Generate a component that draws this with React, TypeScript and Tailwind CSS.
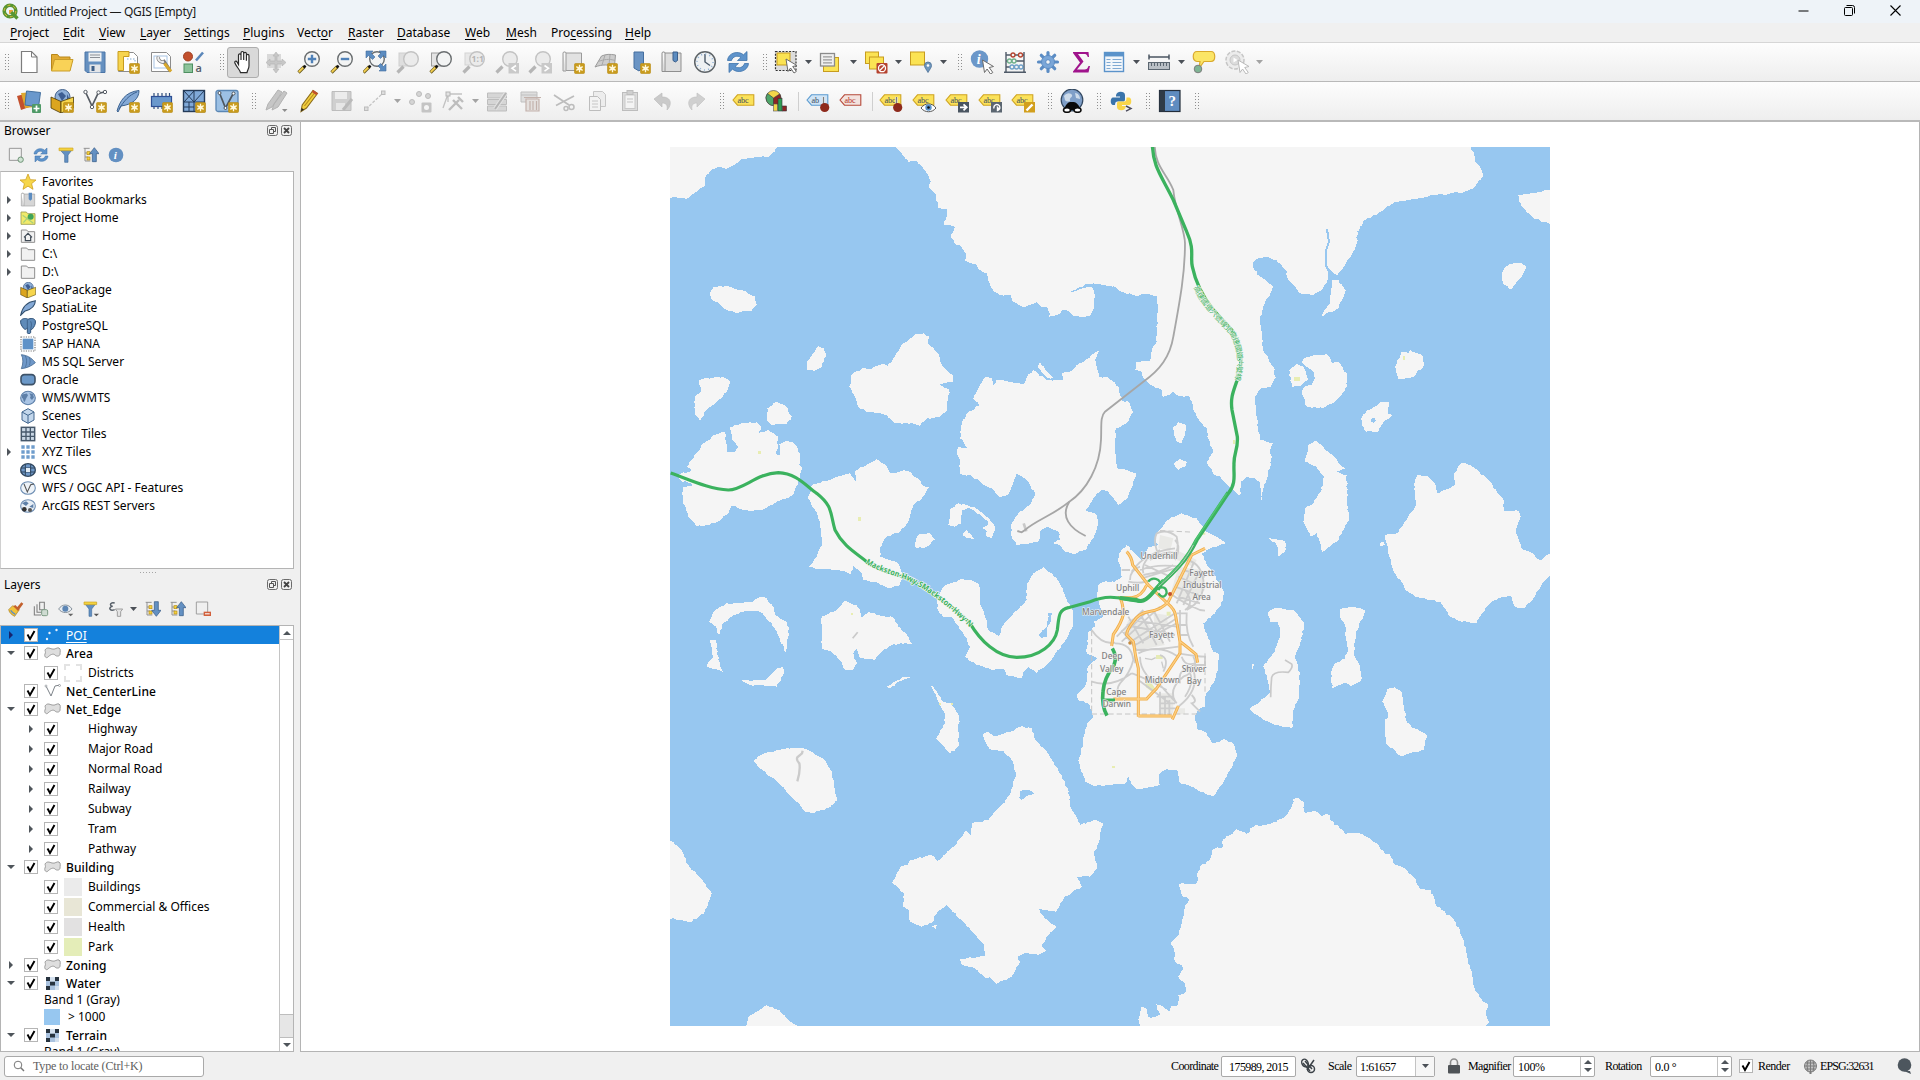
import React from 'react';

/* ---------- shared glyph parts ---------- */

type Kids = { children?: React.ReactNode };

function Ico({ children, s = 24 }: Kids & { s?: number }) {
  return (
    <svg width={s} height={s} viewBox="0 0 24 24" fill="none" className="block shrink-0">
      {children}
    </svg>
  );
}

const Star = () => (
  <g>
    <rect x="13.5" y="13.5" width="10" height="10" rx="1" fill="#c99b1c" stroke="#b98c12" strokeWidth=".6" />
    <path d="M18.5 14.8v7.4M15.3 16.6l6.4 3.8M21.7 16.6l-6.4 3.8" stroke="#fff8dc" strokeWidth="1.3" />
    <circle cx="18.5" cy="18.5" r="2" fill="#fff8dc" />
  </g>
);

const Handle = () => (
  <div className="grid grid-cols-2 gap-x-[2px] gap-y-[2px] w-[4px] shrink-0">
    {Array.from({ length: 12 }).map((_, i) => (
      <div key={i} className="w-px h-px bg-[#8f8f8f]" />
    ))}
  </div>
);

const Arrow = ({ dim = false }: { dim?: boolean }) => (
  <svg width="7" height="4" viewBox="0 0 7 4" className="block shrink-0">
    <path d="M0 0h7L3.5 4z" fill={dim ? '#a3a3a3' : '#4b5057'} />
  </svg>
);

const Lens = ({ dim = false, x = 0 }: { dim?: boolean; x?: number }) => (
  <g transform={`translate(${x} 0)`}>
    <path d="M1.5 22.5l6-6" stroke={dim ? '#b5b5b5' : '#6b5a1e'} strokeWidth="3.2" />
    {!dim && <path d="M1.8 22l4.6-4.6" stroke="#f3cf4e" strokeWidth="1.8" />}
    {!dim && <path d="M6.6 17.6l2-2" stroke="#111" strokeWidth="2.4" />}
    <circle cx="15" cy="9" r="7.3" fill={dim ? '#ebebeb' : '#f3f4f4'} stroke={dim ? '#c3c3c3' : '#6a6e70'} strokeWidth="1.4" />
  </g>
);

const Sheet = ({ c = '#8c8c8c' }: { c?: string }) => (
  <path d="M2.5 2.5h15l4 4v15h-19z" fill="#fff" stroke={c} />
);

const Cursor = ({ x = 0, y = 0, dim = false }: { x?: number; y?: number; dim?: boolean }) => (
  <path
    transform={`translate(${x} ${y})`}
    d="M11 9l11 6.5-4.3 1 3.6 5-2.3 1.5-3.4-5-2.6 3.5z"
    fill="#fff"
    stroke={dim ? '#b9b9b9' : '#6b6b6b'}
    strokeWidth="1"
  />
);

const Tag = ({ red = false, blue = false }: { red?: boolean; blue?: boolean }) => (
  <g>
    <path
      d="M1 11l4.5-5.2h16.3v10.4H5.500z"
      fill={red ? '#f3e3df' : blue ? '#cfe4f6' : '#fbe25a'}
      stroke={red ? '#b5493a' : blue ? '#5b9bd0' : '#cfa422'}
      strokeWidth="1.1"
    />
    <text x="5.4" y="13.8" fontSize="8.200" fontFamily="Liberation Serif, serif" fill={red ? '#b5301c' : '#3c4a5c'}>
      {blue ? 'ab' : 'abc'}
    </text>
  </g>
);

const Pin = () => (
  <g>
    <path d="M17.500 8v7" stroke="#ddd" strokeWidth="2.400" />
    <path d="M17.500 8v7" stroke="#555" strokeWidth=".7" />
    <circle cx="18.700" cy="18.500" r="4.600" fill="#8e2a1c" />
  </g>
);

const Globe = ({ c = '#5d7fa8', f = '#a9c4e4' }: { c?: string; f?: string }) => (
  <g>
    <ellipse cx="12" cy="12" rx="11" ry="10" fill={f} stroke={c} strokeWidth="1.600" />
    <path d="M3 8c3-3 5-1 7-3l2 3-3 5-2 5c-3-2-1-5-4-6zM14 5l5 1 2 5-3 4-3-3 1-3z" fill={c} />
  </g>
);

/* ---------- toolbar icons ---------- */

const newFile = (
  <Ico>
    <path d="M4.500 1.500h10l5.500 5.500v15.500h-15.500z" fill="#fff" stroke="#7d7d7d" strokeWidth="1.200" />
    <path d="M14.500 1.500v5.500h5.500" stroke="#7d7d7d" />
  </Ico>
);
const openFile = (
  <Ico>
    <path d="M1.500 20V4.500h6l2 2.500h10.500v13z" fill="#e2ac35" stroke="#b98718" />
    <path d="M1.500 21l3-11.500h18.500L20 21z" fill="#f9d257" stroke="#c99c28" />
  </Ico>
);
const save = (
  <Ico>
    <path d="M2 2h20v20.500H4l-2-2z" fill="#6590c0" stroke="#4a74a6" />
    <rect x="5.500" y="2.500" width="13" height="9" fill="#eef0f2" />
    <path d="M7 5h10M7 7.500h10" stroke="#8a8f96" />
    <rect x="6.500" y="14.500" width="11" height="8" fill="#e3e5e8" />
    <rect x="8.500" y="16" width="3" height="5" fill="#3d5f88" />
  </Ico>
);
const layout = (
  <Ico>
    <Sheet />
    <path d="M2 1.500h11v5H7.500v14H2z" fill="#f6d44f" stroke="#c79c1f" />
    <path d="M11 9h8v5" stroke="#7fa7d0" strokeDasharray="1.500 1.500" />
    <Star />
  </Ico>
);
const layoutMgr = (
  <Ico>
    <Sheet />
    <rect x="5" y="6" width="13" height="12" stroke="#a7c4e4" />
    <path d="M9.500 6.500a4 4 0 0 0 5.500 5l6 9" stroke="#7a7a7a" strokeWidth="3.400" />
    <path d="M9.500 6.500a4 4 0 0 0 5.500 5" stroke="#ededed" strokeWidth="2" />
    <path d="M15.500 13.500l6.500 8" stroke="#d9a92c" strokeWidth="3" />
  </Ico>
);
const styleMgr = (
  <Ico>
    <circle cx="6" cy="6.500" r="4.500" fill="#c3502d" stroke="#a03e20" />
    <path d="M14 10.500l7-8" stroke="#5b87ba" strokeWidth="2.600" />
    <rect x="2" y="14" width="8.500" height="8.500" fill="#8cc39a" stroke="#4d8f60" />
    <text x="13.500" y="21.500" fontSize="11" fontFamily="Open Sans, sans-serif" fontWeight="600" fill="#555c66">a</text>
  </Ico>
);
const hand = (
  <Ico>
    <path
      d="M7.500 14.500V5.200c0-1.900 2.500-1.900 2.500 0V10 3c0-2 2.700-2 2.700 0v7-6.300c0-1.900 2.700-1.900 2.700 0v7-5c0-1.800 2.600-1.800 2.600 0v10c0 3-1.500 4-2 7H9.500c-.5-3-3.500-5-5.500-9.500-1-2.200 1.200-2.800 2.200-1z"
      fill="#fff"
      stroke="#2b2b2b"
      strokeWidth="1.200"
    />
  </Ico>
);
const panSel = (
  <Ico>
    <rect x="3" y="4" width="14" height="14" fill="#d9d9d9" />
    <path d="M12 2l3 4h-2v5h5V9l4 3.500-4 3.500v-2h-5v5h2l-3 4-3-4h2v-5H6v2l-4-3.500L6 9v2h5V6H9z" fill="#c7c7c7" stroke="#b3b3b3" strokeWidth=".6" />
  </Ico>
);
const zoomIn = (
  <Ico>
    <Lens />
    <path d="M15 4.800v8.400M10.800 9h8.400" stroke="#4f81b8" strokeWidth="2.400" />
  </Ico>
);
const zoomOut = (
  <Ico>
    <Lens />
    <path d="M10.800 9h8.400" stroke="#4f81b8" strokeWidth="2.400" />
  </Ico>
);
const zoomFull = (
  <Ico>
    <Lens x={-1} />
    <path d="M3 1h7L8 3l4 4-2.500 2.500-4-4L3 8zM23 1h-7l2 2-3 3 2.500 2.500 3-3L23 8zM23 21h-7l2-2-3-3 2.500-2.500 3 3L23 14z" fill="#5c8cc0" stroke="#3f6da0" strokeWidth=".6" />
  </Ico>
);
const zoomSel = (
  <Ico>
    <rect x="3" y="3" width="12" height="13" fill="#dedede" stroke="#cfcfcf" />
    <Lens dim />
  </Ico>
);
const zoomLayer = (
  <Ico>
    <rect x="2.500" y="3" width="12" height="13" fill="#e4e4e4" stroke="#9c9c9c" />
    <Lens />
  </Ico>
);
const zoomNative = (
  <Ico>
    <rect x="3" y="3" width="12" height="12" fill="#e8e8e8" stroke="#d3d3d3" />
    <Lens dim />
    <text x="9.600" y="12" fontSize="8.500" fontWeight="700" fontFamily="Open Sans, sans-serif" fill="#b5b5b5">1:1</text>
  </Ico>
);
const zoomPrev = (
  <Ico>
    <Lens dim />
    <rect x="13.500" y="13" width="10.500" height="10.500" fill="#c9c9c9" />
    <path d="M21 15.500l-4 2.800 4 2.800" stroke="#fff" strokeWidth="1.600" />
  </Ico>
);
const zoomNext = (
  <Ico>
    <Lens dim />
    <rect x="13.500" y="13" width="10.500" height="10.500" fill="#c9c9c9" />
    <path d="M16.500 15.500l4 2.800-4 2.800" stroke="#fff" strokeWidth="1.600" />
  </Ico>
);
const mapView = (
  <Ico>
    <path d="M2 3c0-1.500 3-1.500 3 0h15.500v17.500H5V3M2 3v18h3" fill="#e2e2e2" stroke="#9a9a9a" />
    <Star />
  </Ico>
);
const view3d = (
  <Ico>
    <path d="M7.500 6c5-2 8-2 14-1l-1 11c-6-1-12-2-19.500 1z" fill="#cdcdcd" stroke="#9b9b9b" />
    <path d="M4 11.500c6-2 11-3 17-1M11 5L8 15M16 5l-1 10" stroke="#a9a9a9" />
    <Star />
  </Ico>
);
const newBookmark = (
  <Ico>
    <path d="M7 2h9.500v15l-4.500 4-5-3z" fill="#6a94c4" stroke="#456f9f" />
    <Star />
  </Ico>
);
const bookmarks = (
  <Ico>
    <path d="M2 3c0-1.500 3-1.500 3 0h16v18.500H5V3M2 3v18.500h3" fill="#dedede" stroke="#8f8f8f" />
    <path d="M13 2h4.500v8.500l-2.200 1.500-2.300-1.500z" fill="#5c8cc0" stroke="#3b5f8c" />
  </Ico>
);
const clock = (
  <Ico>
    <circle cx="12" cy="12" r="10.300" fill="#eef1f3" stroke="#5e6468" strokeWidth="1.500" />
    <path d="M12 4v8l5 3.500" stroke="#4b5a6a" strokeWidth="1.400" />
    <circle cx="12" cy="12" r="8" stroke="#8fb0d4" strokeDasharray="1 3.190" strokeWidth="1.600" />
  </Ico>
);
const RefreshPaths = () => (
  <g>
    <path d="M1.500 10.500C2 3 12 0 17.500 4.800L21 1.500v9h-9.500L15 7.500C11.500 5 6.500 6.500 5.500 10.500z" fill="#5e93cb" stroke="#3f74ab" strokeWidth=".8" />
    <path d="M22.500 13.500C22 21 12 24 6.500 19.200L3 22.500v-9h9.500L9 16.500c3.500 2.500 8.500 1 9.500-3z" fill="#5e93cb" stroke="#3f74ab" strokeWidth=".8" />
  </g>
);
const refresh = (
  <Ico>
    <RefreshPaths />
  </Ico>
);
const select = (
  <Ico>
    <rect x="1.500" y="1.500" width="20.500" height="19" fill="#dcdcdc" stroke="#333" strokeDasharray="2 1.400" strokeWidth="1.200" />
    <rect x="3" y="3" width="13" height="12" fill="#fbe353" stroke="#c79c1f" />
    <Cursor x={1} y={0} />
  </Ico>
);
const selectValue = (
  <Ico>
    <rect x="4.500" y="7.500" width="15" height="14" fill="#fbe353" stroke="#c79c1f" />
    <rect x="1.500" y="3.500" width="14" height="12.500" fill="#efefef" stroke="#8b8b8b" strokeWidth="1.300" />
    <path d="M4 6.800h9M4 9.800h9M4 12.800h9" stroke="#9a9a9a" strokeWidth="1.200" />
  </Ico>
);
const deselect = (
  <Ico>
    <rect x="1.500" y="2" width="13" height="11.500" fill="#fbe353" stroke="#c79c1f" />
    <rect x="5.500" y="7" width="14" height="12" fill="#fbe353" stroke="#c79c1f" />
    <rect x="12.500" y="13" width="11" height="10.500" rx="1" fill="#b5432f" />
    <circle cx="18" cy="18.200" r="3.500" stroke="#fff" strokeWidth="1.300" />
    <path d="M15.500 20.700l5-5" stroke="#fff" strokeWidth="1.300" />
  </Ico>
);
const selectLoc = (
  <Ico>
    <rect x="1.500" y="2" width="14" height="13" fill="#fbe353" stroke="#c79c1f" />
    <path d="M19 22.500c-2-3.500-3.500-5-3.500-7a3.500 3.500 0 0 1 7 0c0 2-1.500 3.500-3.500 7z" fill="#6f97bd" stroke="#4a6f96" strokeWidth=".8" />
    <circle cx="19" cy="15.500" r="1.300" fill="#fff" />
  </Ico>
);
const InfoDisc = () => (
  <g>
    <circle cx="9.500" cy="9" r="8.700" fill="#6b97c9" />
    <text x="6.800" y="14" fontSize="14" fontStyle="italic" fontWeight="700" fontFamily="Liberation Serif, serif" fill="#fff">i</text>
  </g>
);
const identify = (
  <Ico>
    <InfoDisc />
    <Cursor x={1.500} y={1} />
  </Ico>
);
const abacus = (
  <Ico>
    <path d="M3 2v20M21 2v20M3 5h18M3 11h18M3 17h18M1 22.300h22" stroke="#4f5a68" strokeWidth="1.400" />
    <g strokeWidth="1.300" fill="#f3f3f3">
      <g stroke="#b5432f"><circle cx="10" cy="5" r="2" /><circle cx="17.500" cy="5" r="2" /></g>
      <g stroke="#6fb08a"><circle cx="6.500" cy="11" r="2" /><circle cx="11" cy="11" r="2" /></g>
      <g stroke="#6fa0c8"><circle cx="9" cy="17" r="2" /><circle cx="13.500" cy="17" r="2" /><circle cx="18" cy="17" r="2" /></g>
    </g>
  </Ico>
);
const gear = (
  <Ico>
    <g stroke="#5b8cc4" strokeWidth="3.200" strokeLinecap="round">
      <path d="M12 2.500v19M2.500 12h19M5.300 5.300l13.400 13.400M18.700 5.300L5.300 18.700" />
    </g>
    <circle cx="12" cy="12" r="6.500" fill="#7aa6d8" stroke="#5b8cc4" />
    <circle cx="12" cy="12" r="2.300" fill="#f2f4f6" stroke="#5b8cc4" />
  </Ico>
);
const sigma = (
  <Ico>
    <path d="M4 2h15.500l.5 5h-1.200c-.8-2.500-1.800-3-4-3H9l5.500 7.500L8 19.500h7.500c2.200 0 3.200-1 4-3.500H21l-1.500 6.500H4v-1l7-9L4 3z" fill="#a0148c" />
  </Ico>
);
const table = (
  <Ico>
    <rect x="2.500" y="2.500" width="19" height="19" fill="#f2f6fa" stroke="#5b93ca" strokeWidth="1.400" />
    <path d="M3 4.700h18" stroke="#5b93ca" strokeWidth="3.500" />
    <path d="M4.500 9.500h4M10.500 9.500h9M4.500 12.500h4M10.500 12.500h9M4.500 15.500h4M10.500 15.500h9M4.500 18.500h4M10.500 18.500h9" stroke="#7fa9d2" strokeWidth="1.200" />
  </Ico>
);
const ruler = (
  <Ico>
    <path d="M2 7h20M2 4.500v5M22 4.500v5" stroke="#4b5662" strokeWidth="1.500" />
    <rect x="1.500" y="12.500" width="21" height="7" fill="#b9bfc5" stroke="#5b6670" />
    <path d="M4.500 13v3M7.500 13v3M10.500 13v3M13.500 13v3M16.500 13v3M19.500 13v3" stroke="#5b6670" />
  </Ico>
);
const mapTip = (
  <Ico>
    <path d="M5 1.500h14c5 0 5 10 0 10h-7l-5 7 1-7H5c-5 0-5-10 0-10z" fill="#fbe566" stroke="#d9a92c" strokeWidth="1.200" />
    <circle cx="6" cy="19" r="3.800" fill="#7fb494" stroke="#7c7c7c" />
  </Ico>
);
const actionRun = (
  <Ico>
    <circle cx="10" cy="10" r="9" fill="#ececec" stroke="#c6c6c6" strokeWidth="1.500" strokeDasharray="4 1.500" />
    <circle cx="10" cy="10" r="5" fill="#dcdcdc" stroke="#c6c6c6" />
    <path d="M8.500 7.500l4 2.500-4 2.500z" fill="#fff" />
    <Cursor x={2} y={1} dim />
  </Ico>
);

const dsManager = (
  <Ico>
    <path d="M0 7l11-3 4 13-11 4z" fill="#c3502d" />
    <path d="M4 4l13-1 1 15-10 1z" fill="#e0a92f" />
    <path d="M9.500 2l14 1.500-2 14.500L8 16z" fill="#6a98cc" stroke="#44709f" />
    <rect x="15" y="15" width="9" height="9" rx="1" fill="#4f9a67" />
    <path d="M19.500 16.500v6M16.500 19.500h6" stroke="#fff" strokeWidth="1.700" />
  </Ico>
);
const Gpkg = () => (
  <g>
    <circle cx="12.500" cy="8" r="7.500" fill="#8fb0d8" stroke="#42618c" />
    <path d="M8 5l4-2 4 4-4 5zM17 5l2 4-2 3z" fill="#3d5e92" />
    <path d="M1 8l10 4.500V24L1 19z" fill="#dba51f" stroke="#4a3a08" strokeWidth=".8" />
    <path d="M23.500 8L11 12.500V24l12.500-5z" fill="#f6d54d" stroke="#4a3a08" strokeWidth=".8" />
  </g>
);
const gpkg = (
  <Ico>
    <Gpkg />
    <Star />
  </Ico>
);
const newShp = (
  <Ico>
    <path d="M2.500 3l6.500 14 6-12.500 6.500-1.500" stroke="#555b63" strokeWidth="1.700" />
    <g fill="#fff" stroke="#555b63"><circle cx="2.500" cy="3" r="1.700" /><circle cx="9" cy="18" r="1.700" /><circle cx="15.500" cy="3.500" r="1.700" /><circle cx="22" cy="3" r="1.700" /></g>
    <Star />
  </Ico>
);
const Feather = () => (
  <path d="M1 22C4 12 9 3 23 1.500c0 8-6 14-18 15.500L2 23z" fill="#84a9d6" stroke="#3d6391" />
);
const spatialite = (
  <Ico>
    <Feather />
    <path d="M3 20C8 12 13 6 21 3" stroke="#3d6391" />
    <Star />
  </Ico>
);
const memLayer = (
  <Ico>
    <path d="M5 4v16M9 4v16M13 4v16M17 4v16M20.500 4v16" stroke="#2f4f7c" strokeWidth="1.200" />
    <rect x="2.500" y="7.500" width="20" height="10" fill="#6a98cc" stroke="#2f4f94" strokeWidth="1.200" />
    <Star />
  </Ico>
);
const meshLayer = (
  <Ico>
    <rect x="1.500" y="1.500" width="21" height="21" fill="#80a9d8" stroke="#243a58" strokeWidth="1.400" />
    <path d="M12 2v20M2 13h20M2 2l10 11M12 2L2 13M22 2L12 13M7 13v9M2 18h10" stroke="#243a58" />
    <Star />
  </Ico>
);
const virtLayer = (
  <Ico>
    <rect x="1" y="1.500" width="22" height="21" rx="2" fill="#9cc0e4" stroke="#5a86b4" strokeWidth="1.300" />
    <path d="M4.500 4l6 15L18 5" stroke="#4d565f" strokeWidth="1.700" />
    <g fill="#fff" stroke="#4d565f"><circle cx="4.500" cy="4" r="1.500" /><circle cx="10.500" cy="19" r="1.500" /><circle cx="18.500" cy="4.500" r="1.500" /></g>
    <Star />
  </Ico>
);
const editsDim = (
  <Ico>
    <path d="M2 21l2-6L14 1l4 2L8 18zM8 21l2-6L20 2l3 2-9 14z" fill="#c6c6c6" stroke="#b3b3b3" />
    <path d="M18 20h5.500L20.700 23z" fill="#8d8d8d" />
  </Ico>
);
const pencil = (
  <Ico>
    <path d="M4 22.500l1.200-6.500L16 1.500l4.500 3L9.500 19z" fill="#f3cf3f" stroke="#8b6c1b" strokeWidth="1.100" />
    <path d="M7.500 17L18.300 3" stroke="#b98f1e" strokeWidth="1.200" />
    <path d="M14.800 3l4.600 3.200L20.800 4.200l-4.700-3.200z" fill="#c3502d" />
    <path d="M4 22.500l.7-3.500 2.300 1.600z" fill="#222" />
  </Ico>
);
const saveDim = (
  <Ico>
    <path d="M2 2.500h19v19H2z" fill="#cfcfcf" stroke="#bdbdbd" />
    <rect x="5" y="3" width="12" height="7" fill="#ececec" />
    <rect x="6" y="14" width="9" height="7" fill="#e6e6e6" />
    <path d="M13 21l9-11" stroke="#bababa" strokeWidth="3" />
  </Ico>
);
const lineDim = (
  <Ico>
    <path d="M3 20L20 4" stroke="#c4c4c4" strokeDasharray="3 1.500" strokeWidth="1.300" />
    <rect x="1.500" y="18" width="3.500" height="3.500" fill="#ddd" stroke="#bbb" />
    <rect x="18.500" y="2" width="3.500" height="3.500" fill="#ddd" stroke="#bbb" />
  </Ico>
);
const pointsDim = (
  <Ico>
    <g fill="#d5d5d5" stroke="#bcbcbc"><circle cx="4" cy="13" r="2.500" /><circle cx="11" cy="5" r="2.500" /><circle cx="20" cy="7" r="2.500" /></g>
    <rect x="13.500" y="13.500" width="10" height="10" rx="1" fill="#c4c4c4" />
    <circle cx="18.500" cy="18.500" r="2.500" fill="#f5f5f5" />
  </Ico>
);
const vertexDim = (
  <Ico>
    <path d="M2 19L7 5h14M7 5v8" stroke="#c2c2c2" strokeWidth="1.300" />
    <rect x="5" y="3" width="4" height="4" fill="#e3e3e3" stroke="#b5b5b5" />
    <path d="M8 21l10-10M12 11l9 9M17 8l5 5" stroke="#bdbdbd" strokeWidth="2.400" />
  </Ico>
);
const formDim = (
  <Ico>
    <path d="M1.500 4h19v5h-19zM1.500 10.500h19v5h-19zM1.500 17h19v5h-19z" fill="#d6d6d6" stroke="#bdbdbd" />
    <path d="M9 20L20 4" stroke="#e3e3e3" strokeWidth="4" />
    <path d="M9 20L20 4" stroke="#b5b5b5" strokeWidth="2" />
  </Ico>
);
const trashDim = (
  <Ico>
    <path d="M2 3h16v10H2zM2 6h16" fill="#dedede" stroke="#c0c0c0" />
    <path d="M5 8.500h17M7 10h13v12H7zM11 12v9M14 12v9M17.500 12v9" stroke="#c3b2ac" fill="#e4e0de" strokeWidth="1.200" />
  </Ico>
);
const cutDim = (
  <Ico>
    <path d="M2 6l15 10M4 16.500L22 7" stroke="#bdbdbd" strokeWidth="1.800" />
    <circle cx="19.500" cy="18" r="2.500" stroke="#bdbdbd" strokeWidth="1.500" />
    <circle cx="14" cy="19.500" r="2" stroke="#bdbdbd" strokeWidth="1.500" />
  </Ico>
);
const copyDim = (
  <Ico>
    <path d="M8.500 2.500h9l3 3v12h-12z" fill="#ededed" stroke="#c6c6c6" />
    <path d="M4.500 7.500h8l3 3v11h-11z" fill="#f3f3f3" stroke="#bdbdbd" />
    <path d="M7 12h6M7 15h6M7 18h6" stroke="#c6c6c6" />
  </Ico>
);
const pasteDim = (
  <Ico>
    <rect x="4.500" y="3.500" width="15" height="18" fill="#dcdcdc" stroke="#bdbdbd" />
    <rect x="7" y="6" width="10" height="13.500" fill="#f4f4f4" stroke="#c9c9c9" />
    <rect x="9" y="1.500" width="6" height="4" fill="#cfcfcf" stroke="#bdbdbd" />
    <path d="M9 10h6M9 13h6" stroke="#c3c3c3" />
  </Ico>
);
const undoDim = (
  <Ico>
    <path d="M3 10l8-6v4c10 0 10 8 5 13 1-5-1-7-5-7v4z" fill="#cacaca" stroke="#bdbdbd" strokeWidth=".7" />
  </Ico>
);
const redoDim = (
  <Ico>
    <path d="M21 10l-8-6v4c-10 0-10 8-5 13-1-5 1-7 5-7v4z" fill="#d0d0d0" stroke="#c3c3c3" strokeWidth=".7" />
  </Ico>
);
const tag = (
  <Ico>
    <Tag />
  </Ico>
);
const diagram = (
  <Ico>
    <circle cx="8.500" cy="9" r="7.500" fill="#f4d649" stroke="#555" strokeWidth=".7" />
    <path d="M8.500 9L2.500 4.500A7.500 7.500 0 0 0 8.500 16.500z" fill="#4ea66a" stroke="#444" strokeWidth=".7" />
    <path d="M8.500 9l6.200-4a7.500 7.500 0 0 1-6.200 11.500z" fill="#8e2424" stroke="#444" strokeWidth=".7" />
    <rect x="8.500" y="15" width="4" height="7" fill="#f4d649" stroke="#555" strokeWidth=".6" />
    <rect x="13" y="9.500" width="4" height="12.500" fill="#2f9e55" stroke="#333" strokeWidth=".6" />
    <rect x="17.500" y="17" width="4" height="5" fill="#8e2424" stroke="#333" strokeWidth=".6" />
  </Ico>
);
const tagBluePin = (
  <Ico>
    <Tag blue />
    <Pin />
  </Ico>
);
const tagRed = (
  <Ico>
    <Tag red />
  </Ico>
);
const tagPin = (
  <Ico>
    <Tag />
    <Pin />
  </Ico>
);
const tagEye = (
  <Ico>
    <Tag />
    <path d="M9 19c4-5.500 11-5.500 15 0-4 5-11 5-15 0z" fill="#fff" stroke="#555" />
    <circle cx="16.500" cy="18.500" r="3.200" fill="#5b93ca" />
    <circle cx="16.500" cy="18.500" r="1.300" fill="#111" />
  </Ico>
);
const tagMove = (
  <Ico>
    <Tag />
    <rect x="13" y="13" width="11" height="10.500" fill="#4a5561" />
    <path d="M15 18.300h6M18.500 15.300l3.200 3-3.200 3" stroke="#fff" strokeWidth="1.800" />
  </Ico>
);
const tagRotate = (
  <Ico>
    <Tag />
    <rect x="13" y="13" width="11" height="10.500" fill="#5b6671" />
    <path d="M16 19.500a3 3 0 1 1 3.500 2v-3l2 2" stroke="#fff" strokeWidth="1.400" />
  </Ico>
);
const tagEdit = (
  <Ico>
    <Tag />
    <rect x="13" y="13" width="11" height="10.500" fill="#d29f1d" />
    <path d="M15.500 21.500l6-6" stroke="#fff" strokeWidth="2.400" />
  </Ico>
);
const metaSearch = (
  <Ico>
    <circle cx="12" cy="11" r="10.800" fill="#7f9fc8" stroke="#32475f" strokeWidth="1.200" />
    <path d="M4 7c3-4 7-3 8-1s-3 3-2 5-4 2-5 0zM15 4c3 0 5 3 5 6l-4-1z" fill="#cddbea" />
    <path d="M4.500 21c0-5 4-8 5.500-8h4c1.500 0 6 3 6 8z" fill="#0a0a0a" />
    <ellipse cx="7" cy="21" rx="3.500" ry="2.300" fill="#fff" stroke="#0a0a0a" strokeWidth="1.500" />
    <ellipse cx="17.500" cy="21" rx="3.500" ry="2.300" fill="#fff" stroke="#0a0a0a" strokeWidth="1.500" />
  </Ico>
);
const python = (
  <Ico>
    <path d="M7 6.500C7 1.500 16 1.500 16 6v4.500c0 1.500-1 2-2 2H8.500c-1.500 0-2.500 1-2.500 3.500H4C1 16 1 8.500 4 8.500h7v-1H7z" fill="#3a74ab" />
    <path d="M17.500 8.500H20c3 0 3 7.500 0 7.500h-7v1h4c0 5.500-9 5.500-9 1v-3.500c0-1.500 1-2 2-2h5.500c1.500 0 2-1.500 2-4z" fill="#f9d54a" />
    <path d="M17 17l5 2.600-5 2.600" stroke="#f5f5f5" strokeWidth="3" />
    <path d="M17 17l5 2.600-5 2.600" stroke="#4c4c5c" strokeWidth="1.500" />
  </Ico>
);
const help = (
  <Ico>
    <rect x="1.500" y="1.500" width="20.500" height="21" fill="#5f8cc0" stroke="#222d3a" strokeWidth="1.200" />
    <rect x="1.500" y="1.500" width="5.500" height="21" fill="#2f3b47" />
    <text x="10.500" y="17" fontSize="15" fontWeight="700" fontFamily="Liberation Serif, serif" fill="#fff">?</text>
  </Ico>
);

const Drop = ({ children, dim = false }: Kids & { dim?: boolean }) => (
  <div className="flex items-center gap-[7px] w-[45px] shrink-0">
    {children}
    <Arrow dim={dim} />
  </div>
);

const Sep = () => <div className="w-px h-[19px] bg-[#cfcfcf] shrink-0" />;

const Group = ({ children, items }: Kids & { items?: React.ReactElement[] }) => (
  <div className="flex items-center gap-[9px] shrink-0">
    {items?.map((it, i) => <React.Fragment key={i}>{it}</React.Fragment>)}
    {children}
  </div>
);

/* ---------- window chrome ---------- */

const menus: [string, string, string, string][] = [
  ['', 'P', 'roject', 'w-[53px]'],
  ['', 'E', 'dit', 'w-[36px]'],
  ['', 'V', 'iew', 'w-[41px]'],
  ['', 'L', 'ayer', 'w-[44px]'],
  ['', 'S', 'ettings', 'w-[59px]'],
  ['', 'P', 'lugins', 'w-[54px]'],
  ['Vect', 'o', 'r', 'w-[51px]'],
  ['', 'R', 'aster', 'w-[49px]'],
  ['', 'D', 'atabase', 'w-[68px]'],
  ['', 'W', 'eb', 'w-[41px]'],
  ['', 'M', 'esh', 'w-[45px]'],
  ['Pro', 'c', 'essing', 'w-[74px]'],
  ['', 'H', 'elp', 'w-[40px]'],
];

function TitleBar() {
  return (
    <div className="h-[23px] shrink-0 bg-[#eef3f8] flex items-center pl-[2px]">
      <svg width="17" height="17" viewBox="0 0 17 17">
        <circle cx="8" cy="8" r="5.800" fill="none" stroke="#589632" strokeWidth="3.600" />
        <circle cx="8" cy="8" r="5.800" fill="none" stroke="#e8b93a" strokeWidth="1" strokeDasharray="3 3" />
        <path d="M8 8l7.500 7.500" stroke="#589632" strokeWidth="3.400" />
        <path d="M7 7h4.500L7 11.500z" fill="#e8a13a" />
      </svg>
      <div className="ml-[5px] text-[12px] leading-[16px] tracking-[-0.3px] text-[#1a1a1a]">Untitled Project — QGIS [Empty]</div>
      <div className="ml-auto flex items-center gap-[35px] pr-[19px] -mt-[3px]">
        <svg width="11" height="11" viewBox="0 0 11 11"><path d="M.5 6h10" stroke="#000" /></svg>
        <svg width="11" height="11" viewBox="0 0 11 11" fill="none">
          <rect x=".5" y="2.500" width="8" height="8" rx="1" stroke="#000" />
          <path d="M2.500.500h6a2 2 0 0 1 2 2v6" stroke="#000" />
        </svg>
        <svg width="11" height="11" viewBox="0 0 11 11"><path d="M.5.500l10 10M10.500.500l-10 10" stroke="#000" strokeWidth="1.100" /></svg>
      </div>
    </div>
  );
}

function MenuBar() {
  return (
    <div className="h-[20px] shrink-0 bg-[#f0f0f0] border-b border-[#d6d6d6] flex items-center pl-[10px] text-[12px] text-black">
      {menus.map(([a, u, b, w]) => (
        <div key={a + u + b} className={w}>
          {a}
          <span className="underline underline-offset-2">{u}</span>
          {b}
        </div>
      ))}
    </div>
  );
}

function ToolbarOne() {
  return (
    <div className="h-[39px] shrink-0 flex items-center pl-[5px] bg-linear-to-b from-[#fdfdfd] to-[#eeeeee] border-b border-[#b9b9b9]">
      <Handle />
      <div className="w-[8px] shrink-0" />
      <Group items={[newFile, openFile, save, layout, layoutMgr, styleMgr]} />
      <div className="w-[14px] shrink-0" />
      <Handle />
      <div className="ml-[3px] mr-[5px] w-[32px] h-[31px] shrink-0 rounded-[3px] border border-[#adadad] bg-[#d9d9d9] flex items-center justify-center">{hand}</div>
      <Group items={[panSel, zoomIn, zoomOut, zoomFull, zoomSel, zoomLayer, zoomNative, zoomPrev, zoomNext, mapView, view3d, newBookmark, bookmarks, clock, refresh]} />
      <div className="w-[13px] shrink-0" />
      <Handle />
      <div className="w-[7px] shrink-0" />
      <Drop>{select}</Drop>
      <Drop>{selectValue}</Drop>
      <Drop>{deselect}</Drop>
      <Drop>{selectLoc}</Drop>
      <div className="w-[4px] shrink-0" />
      <Handle />
      <div className="w-[8px] shrink-0" />
      <Group items={[identify, abacus, gear, sigma]} />
      <div className="w-[9px] shrink-0" />
      <Drop>{table}</Drop>
      <Drop>{ruler}</Drop>
      <Group items={[mapTip]} />
      <div className="w-[9px] shrink-0" />
      <Drop dim>{actionRun}</Drop>
    </div>
  );
}

function ToolbarTwo() {
  return (
    <div className="h-[40px] shrink-0 flex items-center pl-[5px] bg-linear-to-b from-[#fdfdfd] to-[#eeeeee] border-b-2 border-[#b9b9b9]">
      <Handle />
      <div className="w-[8px] shrink-0" />
      <Group items={[dsManager, gpkg, newShp, spatialite, memLayer, meshLayer, virtLayer]} />
      <div className="w-[13px] shrink-0" />
      <Handle />
      <div className="w-[8px] shrink-0" />
      <Group items={[editsDim, pencil, saveDim]} />
      <div className="w-[9px] shrink-0" />
      <Drop dim>{lineDim}</Drop>
      <Group items={[pointsDim]} />
      <div className="w-[9px] shrink-0" />
      <Drop dim>{vertexDim}</Drop>
      <Group items={[formDim, trashDim, cutDim, copyDim, pasteDim, undoDim, redoDim]} />
      <div className="w-[12px] shrink-0" />
      <Handle />
      <div className="w-[8px] shrink-0" />
      <Group items={[tag, diagram, <Sep />]} />
      <div className="w-[7px] shrink-0" />
      <Group items={[tagBluePin, tagRed, <Sep />]} />
      <div className="w-[6px] shrink-0" />
      <Group items={[tagPin, tagEye, tagMove, tagRotate, tagEdit]} />
      <div className="w-[13px] shrink-0" />
      <Handle />
      <div className="w-[8px] shrink-0" />
      {metaSearch}
      <div className="w-[13px] shrink-0" />
      <Handle />
      <div className="w-[8px] shrink-0" />
      {python}
      <div className="w-[13px] shrink-0" />
      <Handle />
      <div className="w-[8px] shrink-0" />
      {help}
      <div className="w-[13px] shrink-0" />
      <Handle />
    </div>
  );
}

/* ---------- docks ---------- */

const DockTitle = ({ title }: { title: string }) => (
  <div className="h-[18px] shrink-0 flex items-center pl-[4px] pr-[8px] text-[12px] text-black">
    <span>{title}</span>
    <div className="ml-auto flex gap-[3px] -mt-px">
      <svg width="11" height="11" viewBox="0 0 11 11" fill="none">
        <rect x=".5" y=".5" width="10" height="10" rx="2" stroke="#6b6b6b" />
        <path d="M4.500 4.500v-2h4v4h-2M2.500 4.500h4v4h-4z" stroke="#555" />
      </svg>
      <svg width="11" height="11" viewBox="0 0 11 11" fill="none">
        <rect x=".5" y=".5" width="10" height="10" rx="2" stroke="#6b6b6b" />
        <path d="M3 3l5 5M8 3L3 8" stroke="#444" strokeWidth="1.800" />
      </svg>
    </div>
  </div>
);

const Tri = ({ open = false, c = '#4f555b' }: { open?: boolean; c?: string }) => (
  <svg width="8" height="8" viewBox="0 0 8 8" className="block shrink-0">
    <path d={open ? 'M0 2h8L4 6z' : 'M2 0l4 4-4 4z'} fill={c} />
  </svg>
);

const filterI = (
  <Ico s={16}>
    <path d="M2 3h20l-7 9v11h-5V12z" fill="#6390c2" stroke="#44709f" />
    <path d="M1.500 1.500h21v4h-21z" fill="#f3d33f" stroke="#cfa422" />
  </Ico>
);
const TreeArrow = ({ down = false }: { down?: boolean }) => (
  <Ico s={16}>
    <path d="M1 2h9M3 2v19h8M3 9h5M3 15h5" stroke="#8b8b8b" strokeWidth="1.400" />
    <rect x="6" y="7" width="4.500" height="4.500" fill="#f3d33f" stroke="#b98c12" />
    <rect x="6" y="15" width="4.500" height="4.500" fill="#f3d33f" stroke="#b98c12" />
    <path d={down ? 'M17 23l-7-9h4V1h6v13h4z' : 'M17 1l-7 9h4v12h6V10h4z'} fill="#6390c2" stroke="#2f5582" />
  </Ico>
);
const Folder = ({ children }: Kids) => (
  <Ico s={16}>
    <path d="M2 21.500V3h8l2 2.500h10v16z" fill="#f1f1f1" stroke="#8e8e8e" strokeWidth="1.500" />
    {children}
  </Ico>
);
const smallGlobe = (
  <Ico s={16}>
    <Globe />
  </Ico>
);

const browserRows: [string, boolean, React.ReactElement][] = [
  ['Favorites', false, <Ico s={16}><path d="M12 0l3.400 8.500 8.600.500-6.600 5.500L19.500 23 12 18.200 4.500 23l2.100-8.500L0 9l8.600-.5z" fill="#f6d64a" stroke="#cf9f23" strokeWidth="1.200" /></Ico>],
  ['Spatial Bookmarks', true, <Ico s={16}><path d="M2 3c0-2 4-2 4 0h16v18H6V3M2 3v18h4" fill="#d6d6d6" stroke="#a5a5a5" /><path d="M13 1h5v10l-2.500 2-2.500-2z" fill="#5c8cc0" /></Ico>],
  ['Project Home', true, <Ico s={16}><path d="M1.500 21.500V3h8l2 2.500h11v16z" fill="#f1ea6a" stroke="#9e9e55" strokeWidth="1.300" /><path d="M4 8l8 6 8 6M5 19l7-8" stroke="#a9d07a" strokeWidth="2" /><circle cx="16" cy="10" r="4.500" fill="#3fa35a" /></Ico>],
  ['Home', true, <Folder><path d="M6 14l6-6 6 6M8 13v6h8v-6" stroke="#3f4a55" strokeWidth="1.800" /></Folder>],
  ['C:\\', true, <Folder />],
  ['D:\\', true, <Folder />],
  ['GeoPackage', false, <Ico s={16}><Gpkg /></Ico>],
  ['SpatiaLite', false, <Ico s={16}><path d="M1 23C3 12 9 3 23 1c0 8-6 13-16 16z" fill="#84a9d6" stroke="#34516f" strokeWidth="1.600" /></Ico>],
  ['PostgreSQL', false, <Ico s={16}><path d="M1 4c3-4 8-4 11-2 4-2 9-2 11 2 1 5-2 10-5 13h-2v5c-1 2-5 2-5 0v-7c-2 2-4 3-5 1C3 13 0 8 1 4z" fill="#5f8bb9" stroke="#30537a" strokeWidth="1.500" /><path d="M11 3v12M16 5c2 4 1 8 0 11" stroke="#30537a" /></Ico>],
  ['SAP HANA', false, <Ico s={16}><rect x="4" y="4" width="16" height="16" fill="#5f92c8" /><rect x="1.500" y="1.500" width="21" height="21" stroke="#777" strokeWidth="1.800" strokeDasharray="1.800 1.800" /></Ico>],
  ['MS SQL Server', false, <Ico s={16}><path d="M2 1c3 5 3 14 0 21 9-1 15-4 21-9C17 5 10 2 2 1z" fill="#6f98c8" stroke="#42678f" strokeWidth="1.200" /><path d="M8 3c3 6 2 12 0 17M14 5c2 5 1 9 0 12" stroke="#42678f" /></Ico>],
  ['Oracle', false, <Ico s={16}><rect x="1.500" y="4" width="21" height="15" rx="5" fill="#6b98c8" stroke="#3d5268" strokeWidth="2.400" /></Ico>],
  ['WMS/WMTS', false, smallGlobe],
  ['Scenes', false, <Ico s={16}><path d="M12 1l9 5v12l-9 5-9-5V6z" fill="#c3d7ec" stroke="#42678f" strokeWidth="1.500" /><path d="M3 6l9 5 9-5M12 11v12" stroke="#42678f" strokeWidth="1.500" /></Ico>],
  ['Vector Tiles', false, <Ico s={16}><rect x="2" y="2" width="20" height="20" fill="#c8d6e4" stroke="#46586b" strokeWidth="2.200" /><path d="M9 2v20M15.500 2v20M2 9h20M2 15.500h20" stroke="#46586b" strokeWidth="2" /></Ico>],
  ['XYZ Tiles', true, <Ico s={16}><path d="M2 2h5v5H2zM9.500 2h5v5h-5zM17 2h5v5h-5zM2 9.500h5v5H2zM9.500 9.500h5v5h-5zM17 9.500h5v5h-5zM2 17h5v5H2zM9.500 17h5v5h-5zM17 17h5v5h-5z" fill="#6f9dcc" /></Ico>],
  ['WCS', false, <Ico s={16}><ellipse cx="12" cy="12" rx="11" ry="9.500" fill="#6f98c8" stroke="#30475f" strokeWidth="2" /><path d="M1 9h22M1 15h22M8 3v18M16 3v18" stroke="#30475f" strokeWidth="1.500" /><rect x="9" y="9" width="6" height="6" fill="#e3edf6" /></Ico>],
  ['WFS / OGC API - Features', false, <Ico s={16}><ellipse cx="12" cy="12" rx="11" ry="9.500" fill="#eef3f8" stroke="#6f8fb4" strokeWidth="1.600" /><path d="M6 6l5 12 5-11 5-1" stroke="#555" strokeWidth="1.600" /></Ico>],
  ['ArcGIS REST Servers', false, <Ico s={16}><ellipse cx="12" cy="12" rx="11" ry="9.500" fill="#e7eef5" stroke="#6f8fb4" strokeWidth="1.600" /><path d="M3 8l6-3 4 3-4 4zM14 13l6-4v6z" fill="#5d7fa8" /><circle cx="6.500" cy="17" r="3.500" fill="#333" /><circle cx="15" cy="18" r="3" fill="#555" /></Ico>],
];

function Browser() {
  return (
    <div className="shrink-0 flex flex-col h-[447px]">
      <DockTitle title="Browser" />
      <div className="h-[31px] shrink-0 flex items-center gap-[9px] pl-[8px] pb-[1px]">
        <Ico s={16}><path d="M2 2h18v18H2z" fill="#f2f2f2" stroke="#8b8b8b" strokeWidth="1.300" /><circle cx="19" cy="19" r="4" fill="#cfe3d3" stroke="#6f9377" strokeWidth="1.500" /></Ico>
        <Ico s={16}><RefreshPaths /></Ico>
        {filterI}
        <TreeArrow />
        <Ico s={16}><circle cx="12" cy="12" r="11" fill="#6390c2" /><text x="8.500" y="18" fontSize="17" fontStyle="italic" fontWeight="700" fontFamily="Liberation Serif, serif" fill="#fff">i</text></Ico>
      </div>
      <div className="flex-1 mr-[6px] bg-white border border-[#b4b4b4] border-l-[#d0d0d0] pt-[1px]">
        {browserRows.map(([label, arrow, icon]) => (
          <div key={label} className="h-[18px] flex items-center text-[12px] leading-[18px] text-black">
            <div className="w-[19px] shrink-0 pl-[4px]">{arrow && <Tri />}</div>
            {icon}
            <span className="ml-[6px] whitespace-pre">{label}</span>
          </div>
        ))}
      </div>
    </div>
  );
}

const Check = () => (
  <div className="w-[14px] h-[14px] shrink-0 bg-white border border-[#b5b5b5]">
    <svg width="12" height="12" viewBox="0 0 12 12" fill="none" className="block">
      <path d="M2.500 5.500l2.500 4.500 4.500-8" stroke="#000" strokeWidth="1.900" />
    </svg>
  </div>
);

const polyI = (
  <svg width="17" height="13" viewBox="0 0 17 13" className="block shrink-0">
    <path d="M1 3c2-3 4-2 7-1s5-2 7-1 1 4 1 6-3 3-5 1-5 0-7 2-4-1-3-3 0-3 0-4z" fill="#dedede" stroke="#9c9c9c" />
  </svg>
);
const lineI = (
  <svg width="17" height="14" viewBox="0 0 17 14" fill="none" className="block shrink-0">
    <path d="M2 2l5 10 4-10 5-1" stroke="#7c8288" />
    <circle cx="2" cy="2" r="1" fill="#fff" stroke="#7c8288" strokeWidth=".6" />
    <circle cx="15.500" cy="1.500" r="1" fill="#fff" stroke="#7c8288" strokeWidth=".6" />
  </svg>
);
const pointI = (
  <svg width="17" height="14" viewBox="0 0 17 14" className="block shrink-0">
    <circle cx="3" cy="11" r="1.200" fill="#e8f1fb" /><circle cx="5.500" cy="5" r="1.200" fill="#e8f1fb" /><circle cx="12.500" cy="2" r="1.200" fill="#e8f1fb" />
  </svg>
);
const rasterI = (
  <svg width="17" height="13" viewBox="0 0 17 13" className="block shrink-0">
    <path d="M2 0h13v13H2z" fill="#a9c2df" />
    <path d="M2 0h4v4H2zM11 0h4v4h-4zM6 4.500h5v4H6zM2 9h4v4H2z" fill="#27333f" />
    <path d="M6 0h5v4.500H6zM11 9h4v4h-4z" fill="#d3e0ee" />
  </svg>
);

type Layer = { t: string; k: 'top' | 'sub' | 'band' | 'val'; a?: 'o' | 'c'; i?: React.ReactElement; sel?: boolean; sw?: string };
const layers: Layer[] = [
  { t: 'POI', k: 'top', a: 'c', i: pointI, sel: true },
  { t: 'Area', k: 'top', a: 'o', i: polyI },
  { t: 'Districts', k: 'sub', sw: 'border-2 border-dashed border-[#e3e3e3] bg-white' },
  { t: 'Net_CenterLine', k: 'top', i: lineI },
  { t: 'Net_Edge', k: 'top', a: 'o', i: polyI },
  { t: 'Highway', k: 'sub', a: 'c' },
  { t: 'Major Road', k: 'sub', a: 'c' },
  { t: 'Normal Road', k: 'sub', a: 'c' },
  { t: 'Railway', k: 'sub', a: 'c' },
  { t: 'Subway', k: 'sub', a: 'c' },
  { t: 'Tram', k: 'sub', a: 'c' },
  { t: 'Pathway', k: 'sub', a: 'c' },
  { t: 'Building', k: 'top', a: 'o', i: polyI },
  { t: 'Buildings', k: 'sub', sw: 'bg-[#ebebeb]' },
  { t: 'Commercial & Offices', k: 'sub', sw: 'bg-[#e8e6d6]' },
  { t: 'Health', k: 'sub', sw: 'bg-[#e2e1e1]' },
  { t: 'Park', k: 'sub', sw: 'bg-[#e4edb8]' },
  { t: 'Zoning', k: 'top', a: 'c', i: polyI },
  { t: 'Water', k: 'top', a: 'o', i: rasterI },
  { t: 'Band 1 (Gray)', k: 'band' },
  { t: '> 1000', k: 'val' },
  { t: 'Terrain', k: 'top', a: 'o', i: rasterI },
  { t: 'Band 1 (Gray)', k: 'band' },
];

function LayerRow({ l }: { l: Layer }) {
  if (l.k === 'top')
    return (
      <div className={`h-[18px] shrink-0 flex items-center ${l.sel ? 'bg-[#1481dc]' : ''}`}>
        <div className="w-[23px] shrink-0 pl-[6px]">{l.a && <Tri open={l.a === 'o'} c={l.sel ? '#16246e' : undefined} />}</div>
        <Check />
        <div className="w-[28px] shrink-0 pl-[6px]">{l.i}</div>
        <span className={l.sel ? 'text-white underline underline-offset-2 leading-[18px] pt-px' : 'font-medium leading-[18px] pt-px tracking-[0.1px]'}>{l.t}</span>
      </div>
    );
  if (l.k === 'sub')
    return (
      <div className="h-[20px] shrink-0 flex items-center pt-px">
        <div className="w-[43px] shrink-0 pl-[26px]">{l.a && <Tri />}</div>
        <Check />
        <div className={`w-[18px] h-[18px] ml-[6px] mr-[6px] shrink-0 ${l.sw ?? ''}`} />
        <span className="leading-[18px] pt-px">{l.t}</span>
      </div>
    );
  if (l.k === 'band') return <div className="h-[16px] leading-[16px] shrink-0 pl-[43px]">{l.t}</div>;
  return (
    <div className="h-[18px] shrink-0 flex items-center pl-[43px]">
      <div className="w-[16px] h-[16px] bg-[#97c7f0] mr-[8px]" />
      {l.t}
    </div>
  );
}

function Layers() {
  return (
    <div className="flex-1 min-h-0 flex flex-col">
      <DockTitle title="Layers" />
      <div className="h-[31px] shrink-0 flex items-center gap-[9px] pl-[8px] pb-[1px]">
        <Ico s={16}><path d="M1 13l6-6 10 6-7 10C6 21 2 18 1 13z" fill="#f1c23a" stroke="#a67c1b" /><path d="M8 8l7 7 8-11-3-2-6 7-3-3z" fill="#c3602d" /><path d="M4 14c2 3 4 5 7 6" stroke="#5b8cc4" strokeWidth="2" /></Ico>
        <Ico s={16}><path d="M2 8v13h10M6 5v12h10M10 2h7v11h-7z" stroke="#7f7f7f" strokeWidth="1.600" /><rect x="13" y="13" width="9" height="9" rx="2" fill="#cfdcd2" stroke="#7f9d87" strokeWidth="1.500" /></Ico>
        <Ico s={16}><path d="M1 12c5-8 15-8 20 0-5 7-15 7-20 0z" fill="#e8edf2" stroke="#7f8a94" strokeWidth="1.400" /><circle cx="11" cy="11.500" r="4.500" fill="#5c85b4" /><path d="M15 19h8l-4 4z" fill="#666" /></Ico>
        <Ico s={16}><path d="M2 3h18l-7 9v11H9V12z" fill="#6390c2" stroke="#44709f" /><path d="M1.500 1.500h19v4h-19z" fill="#f3d33f" stroke="#cfa422" /><path d="M16 19h8l-4 4z" fill="#555" /></Ico>
        <div className="flex items-center gap-[6px] -mr-px">
          <Ico s={16}><path d="M10 3C4 1 1 7 7 8 0 9 2 16 10 13" stroke="#555d66" strokeWidth="2.200" /><path d="M11 12h11l-3 4v7h-5v-7z" fill="#e3e3e3" stroke="#9a9a9a" strokeWidth="1.400" /></Ico>
          <Arrow />
        </div>
        <TreeArrow down />
        <TreeArrow />
        <Ico s={16}><path d="M2 1.500h17v18H2z" fill="#f0f0f0" stroke="#9a9a9a" strokeWidth="1.400" /><rect x="13" y="16" width="11" height="6.500" fill="#d2603c" /><path d="M15 19.200h7" stroke="#fff" strokeWidth="1.600" /></Ico>
      </div>
      <div className="flex-1 min-h-0 mr-[6px] bg-white border border-[#b4b4b4] flex">
        <div className="flex-1 flex flex-col overflow-hidden text-[12px] text-black">
          {layers.map((l, i) => <LayerRow key={i} l={l} />)}
        </div>
        <div className="w-[14px] shrink-0 flex flex-col border-l border-[#c4c4c4] bg-white">
          <div className="h-[14px] border-b border-[#c4c4c4] flex items-center justify-center"><svg width="8" height="4"><path d="M0 4h8L4 0z" fill="#4f555b" /></svg></div>
          <div className="flex-1" />
          <div className="h-[24px] bg-[#e6e6e6] border-y border-[#bdbdbd]" />
          <div className="h-[13px] flex items-center justify-center"><svg width="8" height="4"><path d="M0 0h8L4 4z" fill="#4f555b" /></svg></div>
        </div>
      </div>
    </div>
  );
}

/* ---------- map ---------- */

const LAND = '#f5f5f5';
const WATER = '#97c7f0';

function hash(n: number) {
  const s = Math.sin(n * 12.9898) * 43758.5453;
  return s - Math.floor(s);
}

/* Subdivides an outline and nudges the new points so that coasts look ragged. */
function coast(src: string, ox = 0, oy = 0, amp = 5) {
  const p = src.trim().split(/\s+/).map((q) => q.split(',').map(Number));
  const out: string[] = [];
  p.forEach(([x, y], i) => {
    const [x2, y2] = p[(i + 1) % p.length];
    const len = Math.hypot(x2 - x, y2 - y);
    const n = Math.max(1, Math.round(len / 9));
    for (let k = 0; k < n; k++) {
      const j = k === 0 ? 0 : (hash(x + y * 3 + k * 7.3 + i) - 0.5) * amp;
      const nx = len ? -(y2 - y) / len : 0;
      const ny = len ? (x2 - x) / len : 0;
      out.push(`${(ox + x + ((x2 - x) * k) / n + nx * j).toFixed(1)},${(oy + y + ((y2 - y) * k) / n + ny * j).toFixed(1)}`);
    }
  });
  return out.join(' ');
}

const nw = [
  '20,10 355,10 352,21 345,35 325,50 290,50 245,57 220,77 200,86 175,80 150,95 138,105 135,138 118,148 100,162 80,177 45,172 20,177',
  '703,10 703,21 722,35 735,55 745,65 770,64 790,85 805,105 812,125 805,138 828,165 835,205 860,208 860,230 850,253 885,260 880,275 872,292 890,315 905,320 920,345 915,362 950,375 960,390 980,400 985,420 1003,455 1030,467 1052,465 1058,485 1090,502 1130,487 1145,502 1165,503 1168,530 1190,525 1215,508 1240,527 1265,532 1290,528 1303,500 1303,460 1295,440 1270,445 1250,452 1233,455 1240,450 1262,442 1275,433 1300,430 1325,432 1345,435 1360,442 1360,10',
  '148,465 160,440 200,437 225,447 255,452 285,470 290,495 275,512 235,518 200,510 180,492 155,480',
  '475,618 492,625 497,650 485,680 465,692 440,688 440,665 460,640',
  '118,720 140,715 190,710 212,725 200,755 175,780 140,810 120,842 105,820 105,770 122,755',
  '350,786 380,800 395,830 380,852 335,855 320,840 322,805',
  '568,740 575,705 605,685 630,688 665,673 683,677 705,650 725,615 745,600 765,583 790,580 808,590 805,612 830,635 848,680 878,705 878,725 830,732 868,750 860,790 862,812 840,830 800,835 780,857 755,850 705,850 680,825 655,820 620,815 595,800 585,770',
  '80,980 100,955 125,915 150,900 160,885 195,877 202,935 225,938 235,920 215,895 210,860 245,850 290,847 305,860 295,880 325,870 355,890 350,945 360,945 358,912 380,903 405,912 420,940 418,975 427,985 415,1030 400,1065 350,1085 310,1108 270,1115 215,1097 205,1120 165,1150 110,1160 85,1130 68,1080 68,1042 100,1035 60,1020 55,1005 95,990',
  '445,1075 455,1035 520,1015 570,1000 587,1025 587,990 620,975 650,957 680,980 690,1000 740,992 775,1015 785,1035 808,1042 785,1075 760,1095 745,1145 720,1175 680,1190 660,1225 660,1250 715,1270 730,1310 720,1335 685,1345 655,1330 610,1320 605,1300 580,1278 572,1302 530,1290 445,1282 470,1250 487,1215 480,1145 465,1110',
  '975,712 995,715 1000,735 1010,720 1095,730 1100,712 1120,690 1160,720 1210,720 1205,700 1230,695 1250,675 1280,658 1318,630 1305,660 1318,710 1345,712 1375,740 1385,780 1410,790 1420,815 1400,850 1368,865 1365,900 1368,960 1372,985 1400,990 1428,1000 1420,1030 1405,1070 1375,1095 1345,1055 1325,1048 1305,1070 1275,1110 1312,1125 1312,1160 1300,1195 1275,1230 1240,1243 1215,1235 1200,1215 1178,1208 1200,1200 1195,1175 1165,1160 1142,1170 1135,1205 1070,1215 1055,1190 1055,1150 1075,1120 1110,1095 1125,1060 1100,1020 1068,1000 1060,1030 1045,1065 1020,1072 995,1045 960,1025 930,1005 900,1003 900,960 890,940 895,920 925,925 900,895 905,850 925,815 958,797 940,775 955,745',
  '1140,665 1155,690 1180,715 1165,715 1135,685',
  '865,1155 870,1110 895,1090 940,1100 975,1125 1000,1150 1005,1170 995,1195 980,1190 980,1172 965,1165 980,1158 985,1145 930,1105 905,1110 903,1150 885,1160',
  '907,1185 920,1170 945,1198 920,1195',
  '765,1210 775,1185 808,1178 825,1198 800,1220 770,1225',
];
const ne = [
  '0,433 40,437 65,455 105,467 145,462 172,468 172,530 170,605 155,635 150,662 108,665 105,690 125,695 130,715 150,735 185,750 188,772 210,765 220,755 235,768 268,768 278,800 290,830 320,865 322,890 340,935 320,968 345,1005 360,1008 385,1038 400,1050 420,1067 423,1025 440,1010 465,1013 480,1030 485,1085 490,1045 505,1000 515,950 510,930 518,910 480,900 470,830 465,770 485,745 510,742 527,712 520,680 505,655 490,630 480,540 490,500 520,440 505,430 480,410 458,380 465,360 495,350 530,360 560,395 565,420 605,462 640,465 665,450 683,418 685,385 695,395 712,405 735,375 755,345 770,310 772,275 795,240 830,225 860,200 885,185 950,177 1000,165 1090,157 1125,140 1148,110 1145,90 1125,65 1120,35 1112,21 1110,10 0,10',
  '220,860 235,847 258,855 255,880 245,910 230,905 222,885',
  '222,970 240,957 260,965 255,980 235,990',
  '568,690 590,670 610,680 625,720 600,738 575,740',
  '605,665 620,650 680,642 698,670 715,665 740,700 742,740 710,780 670,805 620,800 605,760 612,740 635,735 645,715 640,695 620,680',
  '885,680 905,635 925,640 930,628 970,650 970,680 940,710 895,718',
  '785,830 800,812 850,785 868,785 862,820 878,828 850,845 835,875 800,875 785,855',
  '1205,400 1225,375 1260,368 1278,380 1265,410 1235,448 1208,430',
  '1360,148 1300,158 1255,165 1258,185 1270,205 1300,235 1360,255',
  '695,418 715,420 737,450 715,505 665,528 690,490',
  '615,965 625,915 650,903 690,940 735,985 710,995 740,1005 743,1100 747,1140 710,1205 667,1235 650,1180 632,1190 610,1145 615,1105 635,1095 665,1050 672,1010 650,980',
  '505,1193 555,1205 557,1230 535,1250 530,1215',
  '838,1212 850,1205 855,1215 842,1218',
  '855,1185 890,1180 920,1140 948,1095 943,1030 950,1003 985,1010 1005,1030 1012,1060 1065,1035 1062,1000 1085,968 1115,978 1165,1020 1210,1080 1212,1112 1255,1112 1262,1130 1248,1170 1265,1228 1300,1240 1320,1262 1360,1235 1360,1300 1330,1325 1300,1375 1275,1405 1245,1400 1235,1370 1205,1372 1175,1385 1145,1420 1130,1450 1085,1445 1045,1425 1020,1385 985,1380 945,1370 915,1350 910,1335 880,1290 865,1240',
];
const sw = [
  '148,185 165,150 200,130 280,125 300,110 320,115 340,140 345,165 380,185 387,205 378,278 360,240 335,190 300,155 260,152 215,170 185,195 180,222 170,220 168,200',
  '150,242 168,240 175,300 188,335 140,318 160,290',
  '245,362 315,360 350,325 368,320 370,345 350,380 270,375',
  '485,170 530,150 555,122 590,135 600,150 605,175 625,155 665,168 700,172 715,200 745,230 758,253 700,252 665,275 645,300 600,295 590,268 580,280 590,310 580,328 555,330 540,300 515,275 485,265 487,210',
  '680,380 735,350 750,353 715,365 690,385',
  '812,378 820,380 850,425 875,430 898,475 895,560 870,580 828,535 855,490 855,460 835,425',
  '832,145 830,110 850,80 900,58 935,60 958,75 960,130 980,180 985,210 1015,228 1030,195 1100,120 1100,70 1120,40 1150,22 1175,40 1200,70 1215,110 1238,150 1238,200 1210,250 1165,310 1130,338 1105,320 1095,330 1085,355 1040,345 1030,325 1000,330 950,315 915,290 930,260 910,220 875,170 850,172',
  '280,600 320,578 380,565 440,567 490,595 515,635 525,690 533,720 510,742 455,760 430,750 420,735 350,665 300,625',
  '20,830 60,865 85,915 130,965 155,1000 135,1055 95,1085 20,1073',
  '255,1410 265,1370 320,1335 360,1352 380,1375 430,1410',
  '967,525 985,515 1000,528 1050,515 1080,500 1115,505 1130,545 1160,575 1195,630 1215,670 1230,710 1230,735 1262,795 1300,780 1328,790 1318,840 1303,880 1312,920 1290,950 1250,950 1265,980 1215,1010 1188,1055 1132,1045 1155,1075 1190,1100 1165,1125 1145,1155 1158,1172 1135,1185 1095,1178 1072,1190 1080,1205 1055,1250 1010,1272 990,1252 975,1255 945,1225 905,1215 900,1198 975,1188 970,1150 860,1035 830,1060 815,1090 785,1100 750,1085 745,1048 730,1040 732,1000 697,970 720,920 745,915 750,900 815,885 832,905 890,850 918,812 932,825 935,790 985,780 1020,740 1050,705 1068,640 1055,600 1030,572 990,568',
  '816,1100 830,1095 828,1107',
];
const se = [
  '120,820 118,770 125,740 142,748 145,772 180,765 165,728 190,740 208,758 215,738 235,735 235,705 258,695 255,670 235,650 250,625 225,605 222,570 212,552 238,520 250,470 255,435 268,418 248,410 238,372 290,370 295,355 290,345 300,318 328,300 335,270 370,260 368,240 410,207 440,222 460,200 520,187 550,175 575,140 580,118 595,113 610,125 615,160 640,153 665,168 690,165 690,180 720,205 735,222 780,220 835,252 855,283 870,282 880,310 915,325 940,350 960,388 992,390 1005,430 1025,450 1062,480 1088,535 1105,600 1125,690 1150,725 1165,735 1158,755 1168,785 1150,820',
];
const city = [
  '290,70 310,45 330,25 365,10 410,25 440,65 470,80 497,100 450,115 425,130 440,165 475,215 490,240 490,270 465,310 430,340 440,370 450,400 460,425 475,430 475,480 460,520 438,550 435,590 415,600 405,625 412,655 440,670 460,700 490,688 520,700 533,735 510,780 480,830 460,858 435,850 390,828 360,820 350,780 320,778 295,795 300,825 235,838 215,825 205,800 195,822 100,827 75,815 68,790 55,750 70,700 80,640 100,620 85,580 55,570 50,555 75,530 85,470 112,445 80,430 85,365 105,350 100,335 130,320 110,260 115,225 130,215 165,215 185,200 180,165 172,150 178,130 200,105 225,130 245,150 265,110 295,105 285,80',
  '625,305 645,293 700,300 733,340 725,390 705,440 720,490 715,570 700,600 697,655 650,645 610,630 567,597 600,575 630,545 625,520 610,470 640,430 660,380 655,335 630,335',
  '576,463 581,463 580,476 576,476',
];
const east = [
  '2042,1406 2075,1400 2116,1410 2105,1440 2090,1472 2083,1510 2083,1545 2100,1580 2104,1622 2072,1638 2053,1628 2017,1644 2013,1600 2024,1571 2055,1555 2064,1527 2057,1490 2057,1461 2040,1430',
  '2182,1648 2204,1641 2226,1656 2233,1703 2241,1747 2262,1765 2300,1784 2292,1828 2255,1838 2226,1850 2178,1810 2175,1747 2185,1725 2167,1685',
];

const W_HWY = 'M32,999 C90,1020 150,1048 205,1050 C250,1050 290,1000 355,998 C410,1000 440,1040 470,1060 C520,1100 510,1120 525,1170 C550,1220 590,1240 620,1265 C650,1290 700,1300 735,1312 C800,1340 890,1410 930,1450 C960,1500 1010,1552 1070,1552 C1140,1552 1185,1510 1192,1470 C1197,1430 1195,1410 1225,1403 L1290,1385 C1340,1365 1370,1372 1400,1378 L1440,1384 C1470,1380 1480,1350 1510,1320';
const N_HWY = 'M1477,15 C1480,80 1500,100 1540,180 L1580,275 C1605,330 1590,350 1597,380 C1605,420 1620,460 1660,510 L1715,570 C1740,610 1750,670 1735,710 C1722,750 1710,770 1716,810 L1732,890 C1735,930 1720,940 1722,975 C1720,1000 1730,1030 1705,1060';

const minorRoads =
  'M290,70 q30,-15 60,10 q10,40 -10,60 q-40,10 -50,-20 q-10,-30 0,-50 M345,90 q20,20 0,60 M215,185 q40,-60 130,-70 M205,215 q40,10 80,-10 M240,180 q50,-20 120,-10 M250,195 q60,-10 90,-30 M255,165 L330,200 M300,120 q-60,30 -50,70 M210,210 q0,-30 30,-40 M370,150 q50,0 60,60 q5,60 -50,90 M345,230 L430,260 M355,200 L430,235 M370,180 L435,200 M400,160 L350,280 M420,180 L370,285 M330,250 q40,30 90,50 l15,2 M170,380 L250,300 M185,395 L300,290 M205,400 L345,310 M225,405 L350,340 M200,345 L345,375 M215,330 L350,350 M240,310 L290,405 M260,305 L310,400 M280,300 L330,395 M205,320 L250,400 M185,360 L230,420 M350,310 h30 q-5,60 20,100 M355,345 h25 M355,375 h30 M360,300 v120 M375,300 q30,-20 0,-60 M225,420 q60,0 130,-10 M235,430 q60,-30 120,10 M165,400 q50,0 55,50 q-10,40 -40,70 q-15,20 0,40 M215,490 q20,5 90,40 l45,50 M240,440 q0,60 80,100 M235,510 L330,580 M300,545 v70 M315,560 v55 M328,570 v45 M290,560 h50 M300,595 h50 M350,580 q-30,-40 20,-80 q50,-20 30,-60 M355,430 q60,10 80,10 v25 h-40 M380,470 q30,40 -5,90 M400,480 q20,60 -45,110 M360,520 q-10,-50 50,-50 M395,555 q20,20 0,25 l25,25 M300,435 q30,10 10,50 M225,400 v60 M95,360 q30,45 70,38 M95,515 q60,20 120,-25 M185,180 h25 M270,150 q40,-30 80,-20 M245,205 l100,-30 M355,260 l65,20 M195,370 l60,-60 M235,400 l115,-75 M300,580 h45 M365,440 q10,30 40,20';

const MapText = ({ x, y, children }: Kids & { x: number; y: number }) => (
  <text x={x} y={y} textAnchor="middle" fontSize="25" fontFamily="Noto Sans, sans-serif" fontWeight="500" fill="#808080" stroke="#f5f5f5" strokeWidth="3" paintOrder="stroke">
    {children}
  </text>
);

function MapView() {
  const orange = 'M200,125 q15,15 18,40 L265,225 L320,278 q25,20 27,40 L360,395 v35 L290,535 q-20,20 -30,32 h-100 M435,115 l-40,20 q-30,60 -70,140 q-20,25 -60,30 q-30,5 -45,30 q-20,25 -20,40 l20,20 q5,40 15,80 v145 M235,618 h100 M355,588 l-18,40 M260,225 q-15,35 -45,38 h-35 q10,20 10,50 q-5,25 -30,60 l-5,35 M358,393 q20,15 50,40 l5,25';
  return (
    <svg width="880" height="879" viewBox="30 21 2640 2637" className="block shrink-0" shapeRendering="crispEdges">
      <rect x="30" y="21" width="2640" height="2637" fill={WATER} />
      <g fill={LAND}>
        {nw.map((p, i) => <polygon key={i} points={coast(p)} />)}
        {ne.map((p, i) => <polygon key={i} points={coast(p, 1320, 0)} />)}
        {sw.map((p, i) => <polygon key={i} points={coast(p, 0, 1260)} />)}
        {se.map((p, i) => <polygon key={i} points={coast(p, 1320, 1860, 7)} />)}
        {city.map((p, i) => <polygon key={i} points={coast(p, 1200, 1110)} />)}
        {east.map((p, i) => <polygon key={i} points={coast(p)} />)}
      </g>
      <g fill={WATER}>
        <polygon points={coast('1135,225 1160,200 1165,160 1175,160 1172,185 1160,205 1160,230 1145,235', 0, 1260)} />
        <polygon points={coast('1078,715 1080,695 1090,690 1112,692 1125,702 1100,708 1085,720', 0, 1260, 2)} />
        <circle cx="2140" cy="841" r="7" />
        <path d="M2001,268 l6,37 l-10,30 v40 l10,20" fill="none" stroke={WATER} strokeWidth="6" />
      </g>
      <g fill="#e8edb2">
        <rect x="1903" y="711" width="17" height="12" /><rect x="2229" y="648" width="7" height="11" /><rect x="293" y="934" width="9" height="8" />
        <rect x="593" y="1132" width="10" height="10" /><rect x="1718" y="899" width="6" height="12" /><rect x="573" y="1419" width="6" height="5" />
        <rect x="1356" y="1878" width="8" height="5" /><rect x="838" y="1690" width="6" height="5" /><rect x="872" y="1689" width="6" height="5" />
      </g>
      <g shapeRendering="auto" fill="none">
        <g stroke="#c9c9c9" strokeWidth="5">
          <path d="M428,1832 l-2,8 l-14,12 q-4,8 6,18 q4,20 -6,54" stroke="#cbcbcb" strokeWidth="7" />
          <path d="M593,1477 l-15,18" />
          <path d="M1091,1150 l8,24" strokeWidth="8" />
        </g>
        <g stroke="#a6a6a6" strokeWidth="5.500">
          <path d="M1484,15 C1485,80 1520,100 1540,150 C1545,210 1575,270 1575,310 C1575,400 1560,480 1540,590 C1530,650 1500,690 1450,725 L1335,815 C1320,830 1325,860 1323,900 C1320,980 1280,1050 1228,1085 C1180,1125 1130,1140 1095,1170 L1085,1177 L1072,1173" />
          <path d="M1228,1085 C1200,1130 1230,1165 1277,1188" />
        </g>

        <g transform="translate(1200 1110)">
          <g fill="#e9e9e6">
            <path d="M300,75 l40,10 l-10,40 l-35,-10z M350,120 l60,30 l-10,20 l-50,-20z M280,310 l40,5 l5,35 l-40,10z M350,595 h25 v18 h-25z M205,330 l40,-15 l70,90 l-80,15 l-45,-50z M355,170 l70,10 l10,60 l-60,40 l-40,-40z M300,550 h40 v60 h-40z" />
          </g>
          <path d="M255,515 l20,5 l15,22 l-12,5 l-20,-15z M288,435 h20 v12 h-20z M320,305 h12 v12 h-12z M428,68 h8 v6 h-8z" fill="#e6ebb6" />
          <path d={minorRoads} stroke="#cdcdcd" strokeWidth="5.500" />
          <path d="M95,362 V612 H420 M435,545 V430 M300,62 l90,4" stroke="#c4c4c4" strokeWidth="3" strokeDasharray="16 9" />
          <path d="M255,445 l20,4 l12,-6 M305,455 l5,20" stroke="#c9c9c9" strokeWidth="4" />
          <path d="M632,562 q0,-30 3,-60 q5,-20 50,-15 q15,-15 10,-25 l-20,-12" stroke="#c9c9c9" strokeWidth="5" />
          <path d={orange} stroke="#f2ad45" strokeWidth="9" />
          <path d={orange} stroke="#fccf86" strokeWidth="4" />
        </g>
        <g stroke="#3bb25e">
          <path d={W_HWY} strokeWidth="9.500" />
          <path d={N_HWY} strokeWidth="10" />
          <path d="M1705,1058 L1610,1200 C1580,1260 1550,1290 1490,1345 C1465,1375 1450,1390 1430,1380 L1380,1374" strokeWidth="12" />
          <path d="M1700,1060 L1610,1195 C1580,1255 1550,1285 1495,1335" stroke="#4fc873" strokeWidth="4" />
          <path d="M1465,1325 q10,-15 30,-5 q15,15 0,30 M1495,1345 q25,-10 25,15 q-10,20 -25,0" strokeWidth="7" />
          <path d="M1357,1525 q15,25 5,50 q-30,40 -33,80 q-5,40 12,72" strokeWidth="11" />
          <path d="M1330,1680 h35" strokeWidth="9" />
        </g>
        <path d="M1600,1215 C1575,1265 1545,1295 1495,1340" stroke="#b5c9b9" strokeWidth="3" />
        <circle cx="1530" cy="1362" r="6" fill="#c3502d" />
        <circle cx="1410" cy="1509" r="5" fill="#c98b3a" />
        <path id="west" d="M616,1270 C650,1292 700,1306 735,1318 C800,1345 885,1415 945,1478" />
        <path id="north" d="M1606,440 C1618,470 1640,500 1660,520 L1715,580 C1740,620 1748,680 1722,748" />
        <g fontSize="24" fontWeight="700" fontFamily="Noto Sans, sans-serif" fill="#3bb25e" stroke="#f5f5f5" strokeWidth="4" paintOrder="stroke">
          <text><textPath href="#west" textLength="372" lengthAdjust="spacingAndGlyphs">Mackston-Hwy-SMackston-Hwy-N</textPath></text>
        </g>
        <g fontSize="22" fontFamily="Noto Sans CJK TC, sans-serif" fill="#3bb25e" stroke="#f5f5f5" strokeWidth="3" paintOrder="stroke">
          <text dominantBaseline="middle"><textPath href="#north" textLength="325">高速國道六號線北高速國道六號線</textPath></text>
        </g>
        <g transform="translate(1200 1110)">
          <MapText x={297} y={147}>Underhill</MapText>
          <MapText x={425} y={198}>Fayett</MapText>
          <MapText x={427} y={234}>Industrial</MapText>
          <MapText x={425} y={270}>Area</MapText>
          <MapText x={203} y={243}>Uphill</MapText>
          <MapText x={137} y={316}>Marvendale</MapText>
          <MapText x={304} y={385}>Fayett</MapText>
          <MapText x={156} y={448}>Deep</MapText>
          <MapText x={155} y={485}>Valley</MapText>
          <MapText x={402} y={485}>Shiver</MapText>
          <MapText x={402} y={521}>Bay</MapText>
          <MapText x={307} y={518}>Midtown</MapText>
          <MapText x={169} y={554}>Cape</MapText>
          <MapText x={170} y={590}>Darwin</MapText>
        </g>
      </g>
    </svg>
  );
}

/* ---------- status bar ---------- */

const Spin = ({ children }: Kids) => (
  <div className="w-[82px] h-[21px] flex items-stretch bg-white border border-[#a9a9a9] rounded-[2px] shrink-0">
    <div className="flex-1 pl-[4px] leading-[20px] tracking-[-0.3px]">{children}</div>
    <div className="w-[14px] border-l border-[#c3c3c3] flex flex-col items-center justify-center gap-[4px]">
      <svg width="8" height="4"><path d="M0 4h8L4 0z" fill="#4f555b" /></svg>
      <svg width="8" height="4"><path d="M0 0h8L4 4z" fill="#4f555b" /></svg>
    </div>
  </div>
);

function StatusBar() {
  return (
    <div className="h-[28px] shrink-0 bg-[#f0f0f0] flex items-center pl-[4px] font-['Liberation_Serif',serif] text-[12px] text-black">
      <div className="w-[200px] h-[21px] shrink-0 bg-white border border-[#a9a9a9] rounded-[3px] flex items-center pl-[8px] text-[#5d5d5d]">
        <svg width="12" height="12" viewBox="0 0 12 12" fill="none"><circle cx="5" cy="5" r="3.800" stroke="#777" /><path d="M7.800 7.800L11 11" stroke="#777" strokeWidth="1.500" /></svg>
        <span className="ml-[8px] tracking-[-0.15px]">Type to locate (Ctrl+K)</span>
      </div>
      <div className="ml-[967px] w-[50px] shrink-0 tracking-[-0.6px]">Coordinate</div>
      <div className="w-[75px] h-[21px] shrink-0 bg-white border border-[#a9a9a9] rounded-[2px] text-center leading-[20px] tracking-[-0.6px]">175989, 2015</div>
      <svg width="16" height="16" viewBox="0 0 16 16" fill="none" className="ml-[4px] shrink-0">
        <ellipse cx="5" cy="5" rx="3" ry="4" transform="rotate(-30 5 5)" stroke="#3c4248" strokeWidth="1.500" /><path d="M3 5l7 8M5 3l7 8M14 2L7 12" stroke="#3c4248" strokeWidth="1.500" /><circle cx="11" cy="11" r="3.500" stroke="#3c4248" strokeWidth="1.500" />
      </svg>
      <div className="ml-[12px] w-[28px] shrink-0 tracking-[-0.5px]">Scale</div>
      <div className="w-[79px] h-[21px] shrink-0 flex bg-white border border-[#a9a9a9] rounded-[2px]">
        <div className="flex-1 pl-[3px] leading-[20px] tracking-[-0.5px]">1:61657</div>
        <div className="w-[19px] border-l border-[#c3c3c3] bg-[#f6f6f6] flex items-center justify-center"><Arrow /></div>
      </div>
      <svg width="14" height="16" viewBox="0 0 14 16" fill="none" className="ml-[12px] shrink-0">
        <path d="M3.500 8V4.500a3.500 3.500 0 0 1 7 0V8" stroke="#8b8b8b" strokeWidth="1.600" /><rect x="1" y="7" width="12" height="8.500" rx="1" fill="#4f5357" />
      </svg>
      <div className="ml-[7px] w-[45px] shrink-0 tracking-[-0.6px]">Magnifier</div>
      <Spin>100%</Spin>
      <div className="ml-[10px] w-[45px] shrink-0 tracking-[-0.6px]">Rotation</div>
      <Spin>0.0 °</Spin>
      <div className="ml-[7px]"><Check /></div>
      <div className="ml-[5px] w-[45px] shrink-0 tracking-[-0.5px]">Render</div>
      <svg width="15" height="15" viewBox="0 0 15 15" fill="none" className="shrink-0">
        <circle cx="7.500" cy="7" r="6" fill="#c3c3c3" stroke="#7b7b7b" /><path d="M1.500 7h12M2.500 4h10M2.500 10h10M7.500 1v12M5 1.500q-2 5 0 11M10 1.500q2 5 0 11" stroke="#7b7b7b" /><path d="M7.500 12v3" stroke="#7b7b7b" strokeWidth="2" />
      </svg>
      <div className="ml-[2px] tracking-[-0.9px] shrink-0">EPSG:32631</div>
      <svg width="17" height="16" viewBox="0 0 17 16" className="ml-auto mr-[7px] shrink-0"><circle cx="8.500" cy="7" r="6.800" fill="#4d565e" /><path d="M8 13h6l1 3z" fill="#4d565e" /></svg>
    </div>
  );
}

export default function App() {
  return (
    <div className="w-[1920px] h-[1080px] overflow-hidden flex flex-col bg-[#f0f0f0] font-['Noto_Sans','Noto_Sans_CJK_TC',sans-serif]">
      <TitleBar />
      <MenuBar />
      <ToolbarOne />
      <ToolbarTwo />
      <div className="flex-1 min-h-0 flex">
        <div className="w-[300px] shrink-0 flex flex-col">
          <Browser />
          <div className="h-[7px] shrink-0 flex items-center pl-[140px] gap-[2px]">
            {Array.from({ length: 6 }).map((_, i) => <div key={i} className="w-px h-px bg-[#a5a5a5]" />)}
          </div>
          <Layers />
        </div>
        <div className="flex-1 bg-white border-l border-b border-r border-[#b4b4b4] pl-[369px] pt-[25px]">
          <MapView />
        </div>
      </div>
      <StatusBar />
    </div>
  );
}
